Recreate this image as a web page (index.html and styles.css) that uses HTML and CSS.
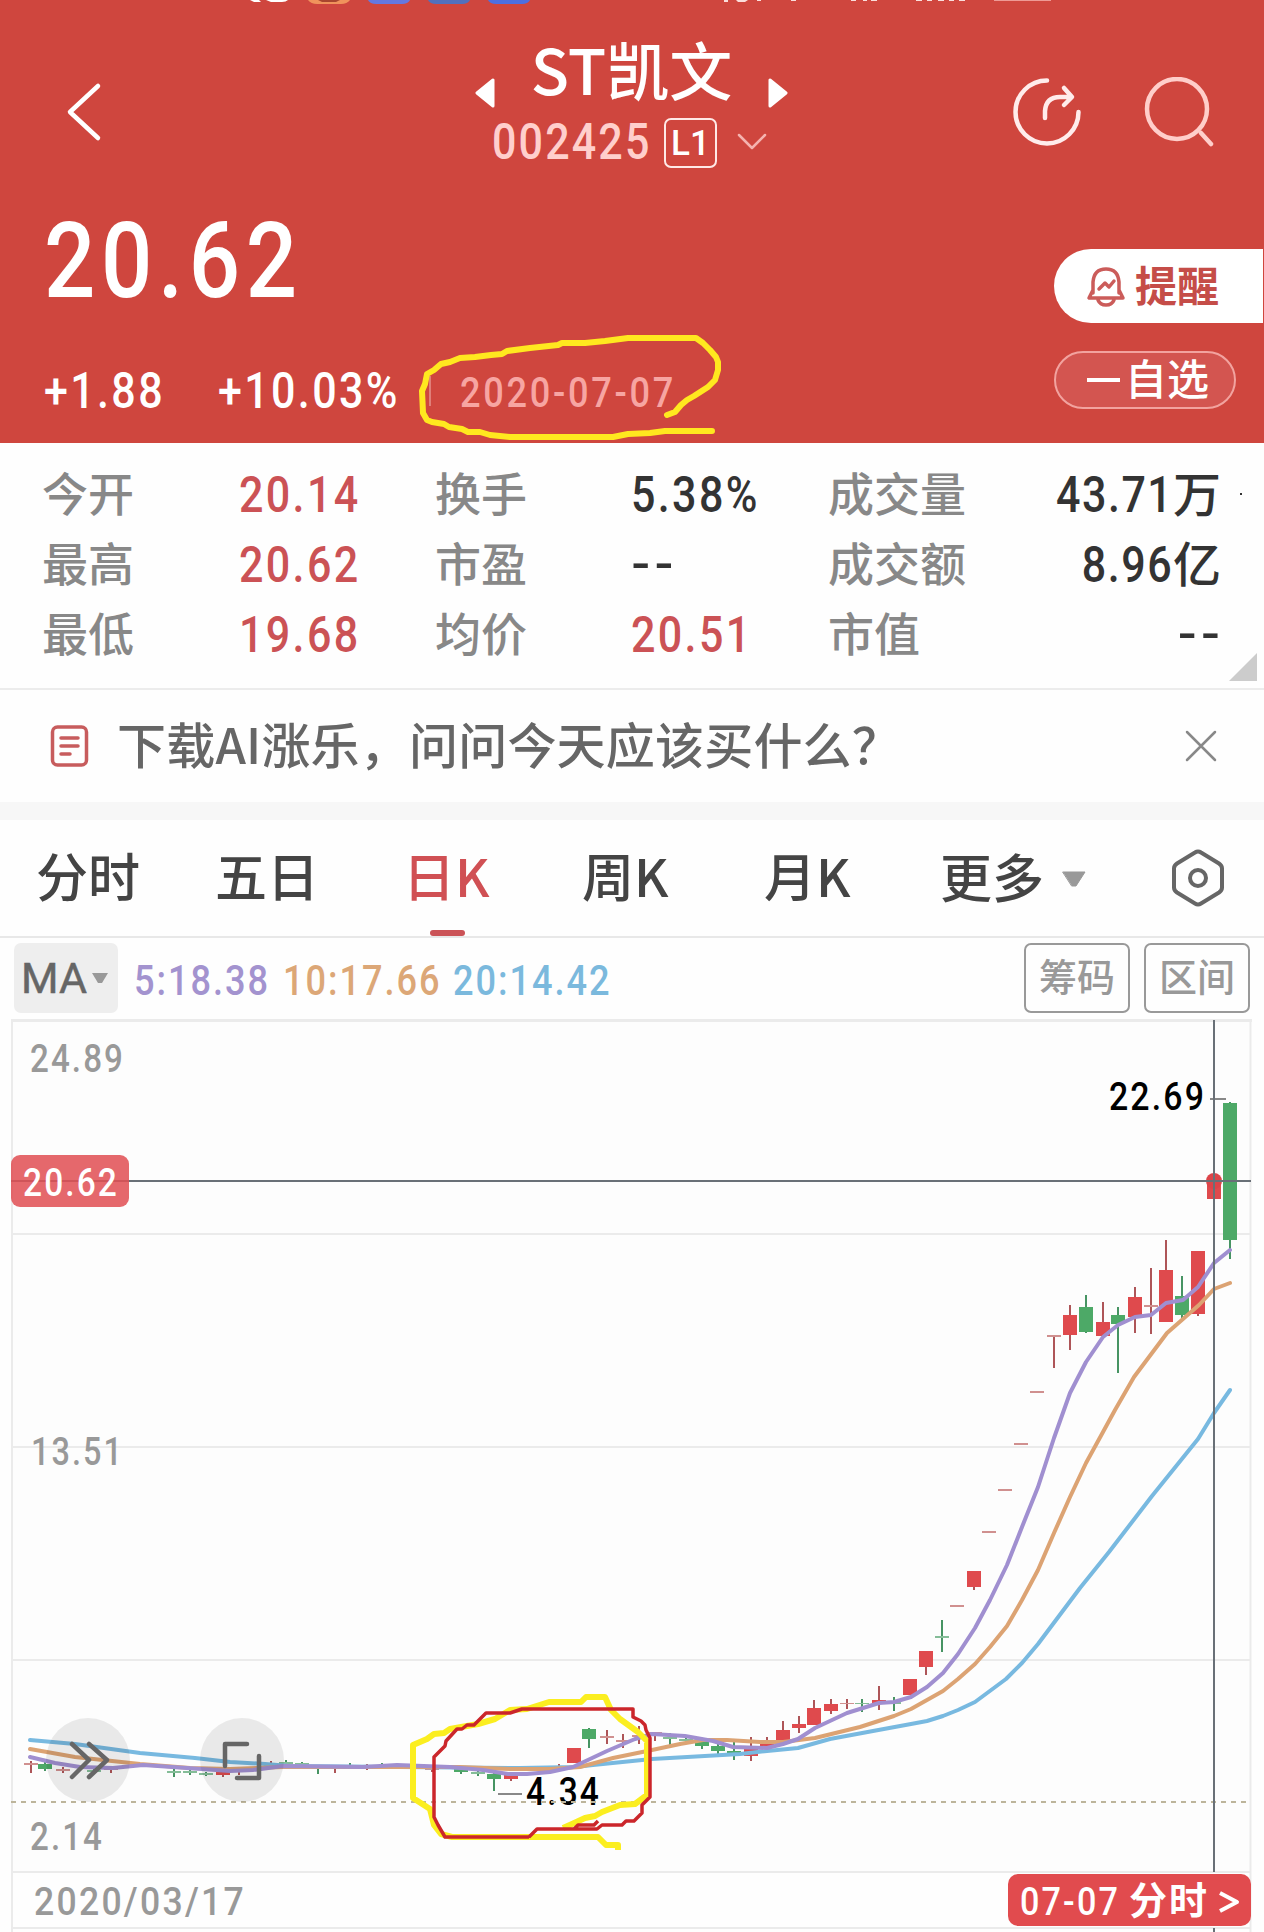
FILE: index.html
```html
<!DOCTYPE html>
<html lang="zh-CN">
<head>
    <meta charset="UTF-8">
    <meta name="viewport" content="width=device-width, initial-scale=1.0">
    <title>ST凯文 002425</title>
    <link rel="stylesheet" href="styles.css">
</head>
<body>
    <header class="header">
        <svg class="status-bar" width="1264" height="6" viewBox="0 0 1264 6">
            <path d="M250 0h9l2 2h-7zM266 0h22q-2 2-6 2h-11z" fill="#fff"/>
            <path d="M308 0h42q-3 4-9 4h-24q-6 0-9-4z" fill="#f0935c"/>
            <path d="M318 0h22l-4 2h-14z" fill="#a8452f"/>
            <path d="M368 0h42q-2 4-8 4h-26q-6 0-8-4z" fill="#6478e0"/>
            <path d="M428 0h42q-2 4-8 4h-26q-6 0-8-4z" fill="#5270bd"/>
            <path d="M488 0h42q-2 4-8 4h-26q-6 0-8-4z" fill="#4d6fe0"/>
            <path d="M724 0h4v2h-4zM736 0h12l-3 2h-7zM757 0h4v1h-4zM791 0h5v1h-5zM851 0h5v1h-5zM863 0h4v1h-4zM871 0h6v1h-6zM916 0h6v1h-6zM927 0h5v1h-5zM938 0h6v1h-6zM949 0h5v1h-5zM959 0h6v1h-6z" fill="#fbdedb"/>
            <path d="M994 0h57v1h-57z" fill="#ee9a95"/>
        </svg>

        <div class="nav">
            <svg class="back" width="40" height="62" viewBox="0 0 40 62">
                <path d="M34 5 6 31l28 26" />
            </svg>
            <div class="stock">
                <div class="stock-name">
                    <svg class="arrow" width="20" height="30" viewBox="0 0 20 30"><path d="M18 2v26L2 15z"/></svg>
                    <h1>ST凯文</h1>
                    <svg class="arrow" width="20" height="30" viewBox="0 0 20 30"><path d="M2 2v26l16-13z"/></svg>
                </div>
                <div class="stock-code">
                    <span class="code num">002425</span>
                    <span class="level">L1</span>
                    <svg width="30" height="18" viewBox="0 0 30 18"><path d="M2 2l13 13L28 2"/></svg>
                </div>
            </div>
            <div class="nav-icons">
                <svg width="70" height="70" viewBox="0 0 70 70" class="icon-share">
                    <path d="M35 3.500A31.500 31.500 0 1 0 66.500 35"/>
                    <path d="M33 41V34Q34 20 48 20H59M52 11l8 9-8 8"/>
                </svg>
                <svg width="70" height="70" viewBox="0 0 70 70" class="icon-search">
                    <circle cx="33" cy="32" r="30"/>
                    <path d="M57 56l10 11"/>
                </svg>
            </div>
        </div>

        <div class="quote">
            <div class="quote-left">
                <div class="price num">20.62</div>
                <div class="change">
                    <span class="diff num">+1.88</span>
                    <span class="percent num">+10.03%</span>
                    <span class="date"><span class="num">2020-07-07</span></span>
                </div>
            </div>
            <div class="quote-actions">
                <div class="remind">
                    <svg width="40" height="42" viewBox="0 0 40 42">
                        <path d="M7 28V17Q8 4 20 4t13 13v11M7 25l-4 8h34l-4-8M12 35q2 5 8 5t8-5"/>
                        <path d="M13 24l6-6 4 4 5-6"/>
                    </svg>
                    <span>提醒</span>
                </div>
                <div class="favorite"><i></i><span>自选</span></div>
            </div>
        </div>

        <svg class="mark" width="320" height="120" viewBox="410 330 320 120">
            <path d="M667 415L675 412 681 405 687 400 694 396 708 387 715 380 718 370V362L716 357 710 350 703 343 696 338H628L605 341 585 343 562 343 558 345 530 348 507 351 502 354 491 355 475 357 460 358 450 362 441 364 434 370 427 374 425 384 422 391 423 413 427 420 432 422 444 424 449 427 462 429 468 432 480 432 490 435 510 437H613L628 434 650 433 665 431H712"/>
        </svg>
    </header>

    <section class="stats">
        <span class="label">今开</span><span class="value up"><span class="num">20.14</span></span>
        <span class="label">换手</span><span class="value"><span class="num">5.38%</span></span>
        <span class="label">成交量</span><span class="value right"><span class="num">43.71</span>万</span>
        <span class="label">最高</span><span class="value up"><span class="num">20.62</span></span>
        <span class="label">市盈</span><span class="value dash">--</span>
        <span class="label">成交额</span><span class="value right"><span class="num">8.96</span>亿</span>
        <span class="label">最低</span><span class="value up"><span class="num">19.68</span></span>
        <span class="label">均价</span><span class="value up"><span class="num">20.51</span></span>
        <span class="label">市值</span><span class="value right dash">--</span>
        <i class="dot"></i>
        <i class="corner"></i>
    </section>

    <section class="banner">
        <svg width="40" height="44" viewBox="0 0 40 44">
            <rect x="2.500" y="3" width="34" height="38" rx="5"/>
            <path d="M11 14h17M11 22h17M11 30h9"/>
        </svg>
        <span class="banner-text">下载AI涨乐，问问今天应该买什么？</span>
        <svg class="close" width="32" height="32" viewBox="0 0 32 32"><path d="M2 2l28 28M30 2L2 30"/></svg>
    </section>

    <nav class="tabs">
        <span class="tab t1">分时</span>
        <span class="tab t2">五日</span>
        <span class="tab t3 active">日K</span>
        <span class="tab t4">周K</span>
        <span class="tab t5">月K</span>
        <span class="tab t6">更多<svg width="26" height="18" viewBox="0 0 26 18"><path d="M2 2h22L15 16h-4z"/></svg></span>
        <svg class="settings" width="54" height="60" viewBox="0 0 54 60">
            <path d="M24 4.500q3-2 6 0l18 11q3 2 3 5v19q0 3-3 5l-18 11q-3 2-6 0l-18-11q-3-2-3-5v-19q0-3 3-5z"/>
            <circle cx="27" cy="30" r="8"/>
        </svg>
    </nav>

    <section class="indicator">
        <div class="ma-select">MA<svg width="18" height="12" viewBox="0 0 18 12"><path d="M1 1h16l-6 10H7z"/></svg></div>
        <span class="ma ma5 num">5:18.38</span>
        <span class="ma ma10 num">10:17.66</span>
        <span class="ma ma20 num">20:14.42</span>
        <button class="tool">筹码</button>
        <button class="tool">区间</button>
    </section>

    <svg class="chart" width="1264" height="913" viewBox="0 1019 1264 913">
        <rect x="12" y="1021" width="1239" height="851" fill="#fdfdfd"/>
        <g class="grid">
            <path d="M11 1020.500H1252" class="top"/>
            <path d="M12 1020V1932M1250.500 1020V1932M12 1234H1250M12 1447H1250M12 1660H1250M12 1872H1250M12 1928H1250"/>
        </g>

        <g class="axis">
            <text x="30" y="1072" textLength="95" lengthAdjust="spacingAndGlyphs">24.89</text>
            <text x="31" y="1465" textLength="93" lengthAdjust="spacingAndGlyphs">13.51</text>
            <text x="30" y="1850" textLength="74" lengthAdjust="spacingAndGlyphs">2.14</text>
            <text x="34" y="1915" textLength="212" lengthAdjust="spacingAndGlyphs">2020/03/17</text>
        </g>

        <text class="extreme" x="526" y="1805" textLength="75" lengthAdjust="spacingAndGlyphs">4.34</text>
        <path class="base" d="M11 1802H1251"/>
        <g id="candles"></g>

        <path class="line ma20-line" d="M30 1740L75 1744 140 1753 195 1758 230 1762 265 1764 290 1766 400 1767 520 1768 575 1767 593 1765 652 1759 740 1754 767 1751 798 1748 830 1739 873 1731 911 1724 927 1721 943 1716 958 1710 975 1702 1006 1679 1022 1663 1038 1644 1080 1588 1109 1552 1152 1496 1198 1439 1214 1413 1230 1390"/>
        <path class="line ma10-line" d="M30 1749L75 1757 140 1764 190 1768 230 1769 283 1767 380 1767 460 1767 510 1769 550 1769 580 1767 613 1758 652 1750 680 1744 703 1740 727 1740 760 1742 783 1742 815 1738 860 1727 894 1716 911 1709 943 1691 958 1679 975 1664 990 1647 1007 1626 1022 1600 1038 1570 1054 1533 1070 1497 1086 1463 1103 1432 1115 1410 1134 1377 1167 1333 1183 1319 1199 1305 1214 1289 1230 1283"/>
        <path class="line ma5-line" d="M30 1757L55 1763 80 1767 113 1768 143 1765 187 1768 230 1771 253 1770 283 1766 363 1767 397 1765 450 1767 483 1770 508 1774 527 1774 550 1772 573 1767 607 1751 635 1739 652 1734 685 1736 713 1741 733 1747 767 1748 783 1744 798 1739 815 1728 847 1713 879 1703 894 1702 911 1697 927 1687 943 1673 958 1654 975 1628 990 1600 1007 1565 1022 1527 1038 1487 1054 1438 1070 1393 1086 1362 1103 1337 1118 1325 1135 1317 1151 1315 1166 1303 1183 1300 1198 1287 1214 1263 1230 1250"/>

        <path d="M498 1794h24M1210 1099h16" stroke="#888" stroke-width="2"/>
        <text class="extreme" x="1109" y="1110" textLength="97" lengthAdjust="spacingAndGlyphs">22.69</text>

        <circle cx="1214" cy="1181" r="8" fill="#dd4448"/>
        <path class="cross" d="M11 1181H1251M1214 1020V1872M1214 1928V1932"/>

        <rect x="11" y="1155" width="118" height="52" rx="9" fill="#e14f54" fill-opacity=".86"/>
        <text class="tag" x="23" y="1196" textLength="96" lengthAdjust="spacingAndGlyphs">20.62</text>

        <g class="float">
            <circle cx="88" cy="1760" r="42"/>
            <circle cx="242" cy="1760" r="42"/>
            <path d="M72 1744l17 16-17 17M89 1744l18 16-18 17M247 1744h-22v22M259 1756v22h-22"/>
        </g>

        <path class="pen yellow" d="M563 1828L572 1824 585 1818 595 1816 602 1812 620 1805 635 1804 647 1795V1741L638 1732 620 1719 611 1710 605 1697H586L581 1702H549L527 1709 510 1710 495 1719 478 1724 450 1729 444 1733 434 1734 427 1739 413 1745V1798L430 1809 434 1825 441 1834 452 1837H598L606 1845H618V1850"/>
        <path class="pen red" d="M598 1821L594 1825H578L574 1829M529 1837L537 1829H597L602 1825H622L626 1821H634L642 1813V1805L650 1797V1738L646 1730 645 1725 641 1721 633 1717V1709H522L510 1713H486L474 1725H467L462 1729H457L446 1741 445 1746 434 1757V1817L438 1825 445 1837H529"/>

        <g class="detail">
            <rect x="1008" y="1874" width="243" height="52" rx="10" fill="#e14b4e"/>
            <text x="1020" y="1915" textLength="100" lengthAdjust="spacingAndGlyphs">07-07</text>
            <text class="cn" x="1129" y="1914" textLength="78">分时</text>
            <path d="M1220 1893l17 9-17 9"/>
        </g>
    </svg>
    <script src="script.js"></script>
</body>
</html>
```
FILE: styles.css
```css
* {
    margin: 0;
    padding: 0;
    box-sizing: border-box;
}

body {
    width: 1264px;
    height: 1932px;
    overflow: hidden;
    font-family: "Noto Sans CJK SC", "Noto Sans", sans-serif;
    font-weight: 500;
    background: #fefefe;
    color: #333;
}

svg {
    display: block;
    flex: none;
    fill: none;
    stroke-linecap: round;
    stroke-linejoin: round;
}

/* Narrow digits */
.num {
    display: inline-block;
    font-family: Roboto, sans-serif;
    letter-spacing: 0.055em;
    white-space: nowrap;
    transform: scaleX(0.86);
    transform-origin: left center;
}

/* Header */
.header {
    position: relative;
    height: 443px;
    background: #cf463e;
    color: #fff;
}

.nav {
    display: flex;
    justify-content: space-between;
    height: 194px;
    padding: 28px 50px 0 64px;
}

.back {
    margin-top: 47px;
    stroke: #fff;
    stroke-width: 4.5;
}

.stock {
    display: flex;
    flex-direction: column;
    align-items: center;
    margin-left: 147px;
    padding-top: 3px;
}

.stock-name {
    display: flex;
    gap: 36px;
}

.stock-name h1 {
    font-size: 63px;
    line-height: 62px;
    font-weight: 500;
}

.arrow {
    margin-top: 41px;
    fill: #fff;
    stroke: #fff;
    stroke-width: 3;
}

.stock-code {
    display: flex;
    align-items: center;
    margin: 8px 4px 0 0;
    height: 52px;
}

.code {
    width: 159px;
    font-size: 50px;
    line-height: 52px;
    letter-spacing: 0.05em;
    color: #ffcfcc;
}

.level {
    width: 53px;
    height: 50px;
    margin: 1px 20px 0 13px;
    border: 2px solid #ffe9e7;
    border-radius: 7px;
    font-family: Roboto, sans-serif;
    font-size: 35px;
    line-height: 47px;
    text-align: center;
}

.stock-code svg {
    stroke: #f5b3af;
    stroke-width: 2.5;
}

.nav-icons {
    display: flex;
    gap: 62px;
    margin-top: 43px;
}

.icon-share {
    stroke: #ffeceb;
    stroke-width: 4.5;
}

.icon-search {
    stroke: #ffceca;
    stroke-width: 4.5;
}

.quote {
    display: flex;
    justify-content: space-between;
}

.quote-left {
    padding-left: 44px;
}

.price {
    display: block;
    margin-top: 10px;
    font-size: 105px;
    line-height: 104px;
    letter-spacing: 0.063em;
}

.change {
    display: flex;
    align-items: center;
    height: 60px;
    margin-top: 47px;
    font-size: 50px;
    line-height: 60px;
}

.diff {
    width: 174px;
}

.percent {
    width: 211px;
}

.date {
    height: 30px;
    padding-left: 29px;
    border-left: 2px solid #e07f79;
    font-size: 42px;
    line-height: 26px;
    color: #f7a5a2;
}

.date .num {
    letter-spacing: 0.075em;
}

.quote-actions {
    display: flex;
    flex-direction: column;
    align-items: flex-start;
    width: 210px;
    padding-top: 49px;
}

.remind {
    display: flex;
    align-items: center;
    gap: 9px;
    width: 209px;
    height: 74px;
    padding-left: 32px;
    border-radius: 37px 0 0 37px;
    background: #fff;
    color: #c54d48;
    font-size: 42px;
    font-weight: 700;
    line-height: 68px;
}

.remind span {
    margin-top: -5px;
}

.remind svg {
    stroke: #cb5c5a;
    stroke-width: 3.5;
}

.favorite {
    display: flex;
    align-items: center;
    width: 182px;
    height: 58px;
    margin-top: 28px;
    padding-left: 31px;
    border: 2px solid #f2a39f;
    border-radius: 29px;
    background: #d35550;
    font-size: 42px;
    line-height: 50px;
}

.favorite i {
    width: 33px;
    height: 4px;
    margin-right: 5px;
    background: #fff;
}

.favorite span {
    margin-top: -7px;
}

.mark {
    position: absolute;
    left: 410px;
    top: 330px;
    stroke: #ffe81f;
    stroke-width: 6;
}

/* Quote table */
.stats {
    position: relative;
    display: grid;
    grid-template-columns: 197px 196px 196px 197px 160px 233px;
    grid-auto-rows: 70px;
    height: 247px;
    padding: 13px 0 0 42px;
    border-bottom: 2px solid #ececec;
    line-height: 70px;
}

.label {
    font-size: 46px;
    color: #888;
}

.value {
    font-size: 48px;
}

.value .num {
    height: 70px;
    font-size: 50px;
}

.value.up {
    color: #cb5255;
}

.right {
    text-align: right;
}

.right .num {
    letter-spacing: 0.035em;
    transform-origin: right center;
}

.value.dash {
    font-size: 54px;
    line-height: 64px;
    letter-spacing: 4px;
}

.right.dash {
    margin-right: -3px;
}

.dot {
    position: absolute;
    left: 1240px;
    top: 50px;
    width: 2px;
    height: 2px;
    background: #333;
}

.corner {
    position: absolute;
    right: 7px;
    bottom: 7px;
    border-left: 28px solid transparent;
    border-bottom: 28px solid #ccc;
}

/* Banner */
.banner {
    display: flex;
    align-items: center;
    height: 112px;
    padding: 0 47px 0 50px;
    font-size: 49px;
    line-height: 70px;
    letter-spacing: 0.2px;
    color: #666;
}

.banner svg {
    stroke: #c75c5d;
    stroke-width: 3.5;
}

.banner-text {
    margin: -7px auto 0 27px;
}

.banner .close {
    stroke: #888;
    stroke-width: 2.5;
}

/* Period tabs */
.tabs {
    display: flex;
    align-items: center;
    height: 136px;
    border-top: 18px solid #f7f7f7;
    border-bottom: 2px solid #e8e8e8;
    padding-left: 36px;
}

.tab {
    position: relative;
    width: 179px;
    height: 116px;
    font-size: 52px;
    line-height: 110px;
    color: #444;
    white-space: nowrap;
}

.t2 {
    width: 188px;
}

.t4 {
    width: 182px;
}

.t5 {
    width: 176px;
}

.t6 {
    display: flex;
    align-items: center;
    gap: 17px;
    width: 231px;
    padding-bottom: 5px;
}

.t6 svg {
    margin-top: 6px;
    fill: #999;
    stroke: #999;
}

.tab.active {
    color: #d05054;
}

.tab.active::after {
    content: "";
    position: absolute;
    left: 27px;
    bottom: 0;
    width: 35px;
    height: 6px;
    border-radius: 3px;
    background: #cb5357;
}

.settings {
    stroke: #666;
    stroke-width: 4;
}

/* Moving average row */
.indicator {
    display: flex;
    align-items: center;
    height: 81px;
    padding: 0 14px 1px;
}

.ma-select {
    display: flex;
    align-items: center;
    gap: 4px;
    width: 104px;
    height: 70px;
    margin-right: 16px;
    padding-left: 7px;
    border-radius: 7px;
    background: #eee;
    color: #666;
    font-family: Roboto, sans-serif;
    font-size: 43px;
    font-weight: 400;
    line-height: 66px;
    -webkit-text-stroke: 0.5px #666;
}

.ma-select svg {
    fill: #999;
}

.ma {
    padding-top: 5px;
    font-size: 42px;
    line-height: 66px;
    font-weight: 500;
}

.ma5 {
    width: 149px;
    color: #a393cf;
}

.ma10 {
    width: 170px;
    color: #dca777;
}

.ma20 {
    margin-right: auto;
    color: #7bb9dd;
}

.tool {
    width: 106px;
    height: 70px;
    margin-left: 14px;
    padding-bottom: 8px;
    border: 2px solid #999;
    border-radius: 7px;
    background: #fefefe;
    color: #999;
    font: 500 38px "Noto Sans CJK SC", sans-serif;
}

/* K-line chart */
.chart {
    font-family: Roboto, sans-serif;
    font-size: 39.5px;
    font-weight: 500;
    letter-spacing: 2.5px;
    stroke-linecap: butt;
}

.grid path {
    stroke: #ebebeb;
    stroke-width: 2;
}

.grid .top {
    stroke-width: 3;
}

.axis text {
    fill: #999;
}

.extreme {
    fill: #000;
}

.tag {
    fill: #fff;
}

.base {
    stroke: #bdb59b;
    stroke-width: 2;
    stroke-dasharray: 5 5;
}

.line {
    stroke-width: 4;
    stroke-linecap: round;
}

.ma5-line {
    stroke: #a08fd0;
}

.ma10-line {
    stroke: #dca373;
}

.ma20-line {
    stroke: #78b9e0;
}

.cross {
    stroke: #697077;
    stroke-width: 2;
}

.float circle {
    fill: #000;
    fill-opacity: 0.08;
}

.float path {
    stroke: #666;
    stroke-width: 4.5;
    stroke-linecap: round;
}

.pen.yellow {
    stroke: #fbee20;
    stroke-width: 6;
}

.pen.red {
    stroke: #cb262b;
    stroke-width: 3.5;
}

.detail text {
    fill: #fff;
}

.detail .cn {
    font-family: "Noto Sans CJK SC", sans-serif;
    font-size: 38px;
    font-weight: 700;
    letter-spacing: 0;
}

.detail path {
    stroke: #fff;
    stroke-width: 4;
}
```
FILE: script.js
```javascript
// x, body top, body bottom, high, low, 1 = up / 0 = down
const candles = [
    [31, 1763, 1765, 1761, 1773, 1],
    [45, 1764, 1769, 1762, 1771, 0],
    [63, 1769, 1771, 1767, 1773, 1],
    [94, 1770, 1772, 1769, 1773, 0],
    [111, 1769, 1770, 1769, 1773, 1],
    [174, 1771, 1773, 1769, 1777, 0],
    [190, 1771, 1773, 1769, 1775, 0],
    [206, 1773, 1775, 1772, 1776, 0],
    [223, 1772, 1775, 1771, 1777, 1],
    [239, 1770, 1771, 1770, 1775, 1],
    [271, 1766, 1767, 1761, 1767, 1],
    [286, 1762, 1764, 1760, 1765, 0],
    [302, 1763, 1765, 1762, 1765, 0],
    [318, 1767, 1768, 1767, 1774, 0],
    [335, 1767, 1768, 1767, 1773, 1],
    [350, 1765, 1766, 1763, 1768, 0],
    [367, 1766, 1767, 1764, 1770, 1],
    [382, 1766, 1767, 1763, 1768, 0],
    [432, 1769, 1770, 1767, 1772, 1],
    [461, 1769, 1772, 1768, 1774, 0],
    [478, 1772, 1774, 1771, 1776, 0],
    [494, 1774, 1779, 1773, 1791, 0],
    [511, 1775, 1779, 1774, 1781, 1],
    [559, 1768, 1769, 1764, 1769, 1],
    [574, 1748, 1763, 1748, 1763, 1],
    [589, 1729, 1739, 1728, 1748, 0],
    [607, 1736, 1738, 1730, 1744, 1],
    [623, 1740, 1742, 1734, 1748, 1],
    [639, 1735, 1737, 1726, 1744, 1],
    [655, 1732, 1734, 1732, 1741, 1],
    [670, 1737, 1739, 1733, 1745, 0],
    [686, 1739, 1741, 1737, 1743, 0],
    [702, 1742, 1746, 1740, 1749, 0],
    [718, 1746, 1751, 1744, 1755, 0],
    [734, 1751, 1755, 1742, 1760, 0],
    [751, 1749, 1756, 1737, 1761, 1],
    [767, 1742, 1746, 1737, 1746, 1],
    [783, 1730, 1740, 1721, 1740, 1],
    [799, 1724, 1728, 1716, 1733, 1],
    [814, 1708, 1725, 1700, 1725, 1],
    [831, 1704, 1711, 1699, 1714, 1],
    [847, 1703, 1704, 1699, 1709, 1],
    [862, 1703, 1704, 1699, 1712, 0],
    [879, 1700, 1703, 1686, 1710, 1],
    [894, 1702, 1704, 1697, 1711, 0],
    [910, 1679, 1695, 1679, 1695, 1],
    [926, 1651, 1667, 1651, 1675, 1],
    [942, 1636, 1638, 1620, 1652, 0],
    [957, 1605, 1607, 1605, 1607, 1],
    [974, 1571, 1587, 1571, 1590, 1],
    [989, 1531, 1533, 1531, 1533, 1],
    [1005, 1489, 1491, 1489, 1491, 1],
    [1021, 1443, 1445, 1443, 1445, 1],
    [1037, 1391, 1393, 1391, 1393, 1],
    [1054, 1335, 1337, 1335, 1368, 1],
    [1070, 1315, 1335, 1305, 1350, 1],
    [1086, 1307, 1332, 1295, 1333, 0],
    [1103, 1322, 1336, 1302, 1336, 1],
    [1118, 1315, 1324, 1307, 1373, 0],
    [1135, 1297, 1317, 1287, 1333, 1],
    [1151, 1305, 1307, 1268, 1334, 1],
    [1166, 1270, 1322, 1240, 1322, 1],
    [1182, 1296, 1315, 1276, 1318, 0],
    [1198, 1251, 1314, 1251, 1316, 1],
    [1214, 1181, 1199, 1181, 1217, 1],
    [1230, 1103, 1240, 1102, 1259, 0]
];

const group = document.getElementById('candles');

function rect(x, y, width, height, color) {
    const el = document.createElementNS('http://www.w3.org/2000/svg', 'rect');
    el.setAttribute('x', x);
    el.setAttribute('y', y);
    el.setAttribute('width', width);
    el.setAttribute('height', height);
    el.setAttribute('fill', color);
    group.appendChild(el);
}

candles.forEach(([x, top, bottom, high, low, up]) => {
    const flat = bottom - top < 3;
    const wick = up ? '#ae5558' : '#479463';
    const flatColor = up ? '#d0908f' : '#85bd98';
    if (low - high > 2) {
        rect(x - 1, high, 2, low - high, wick);
    }
    rect(x - 7, top, 14, bottom - top, flat ? flatColor : (up ? '#df4a4d' : '#4da967'));
});
```
